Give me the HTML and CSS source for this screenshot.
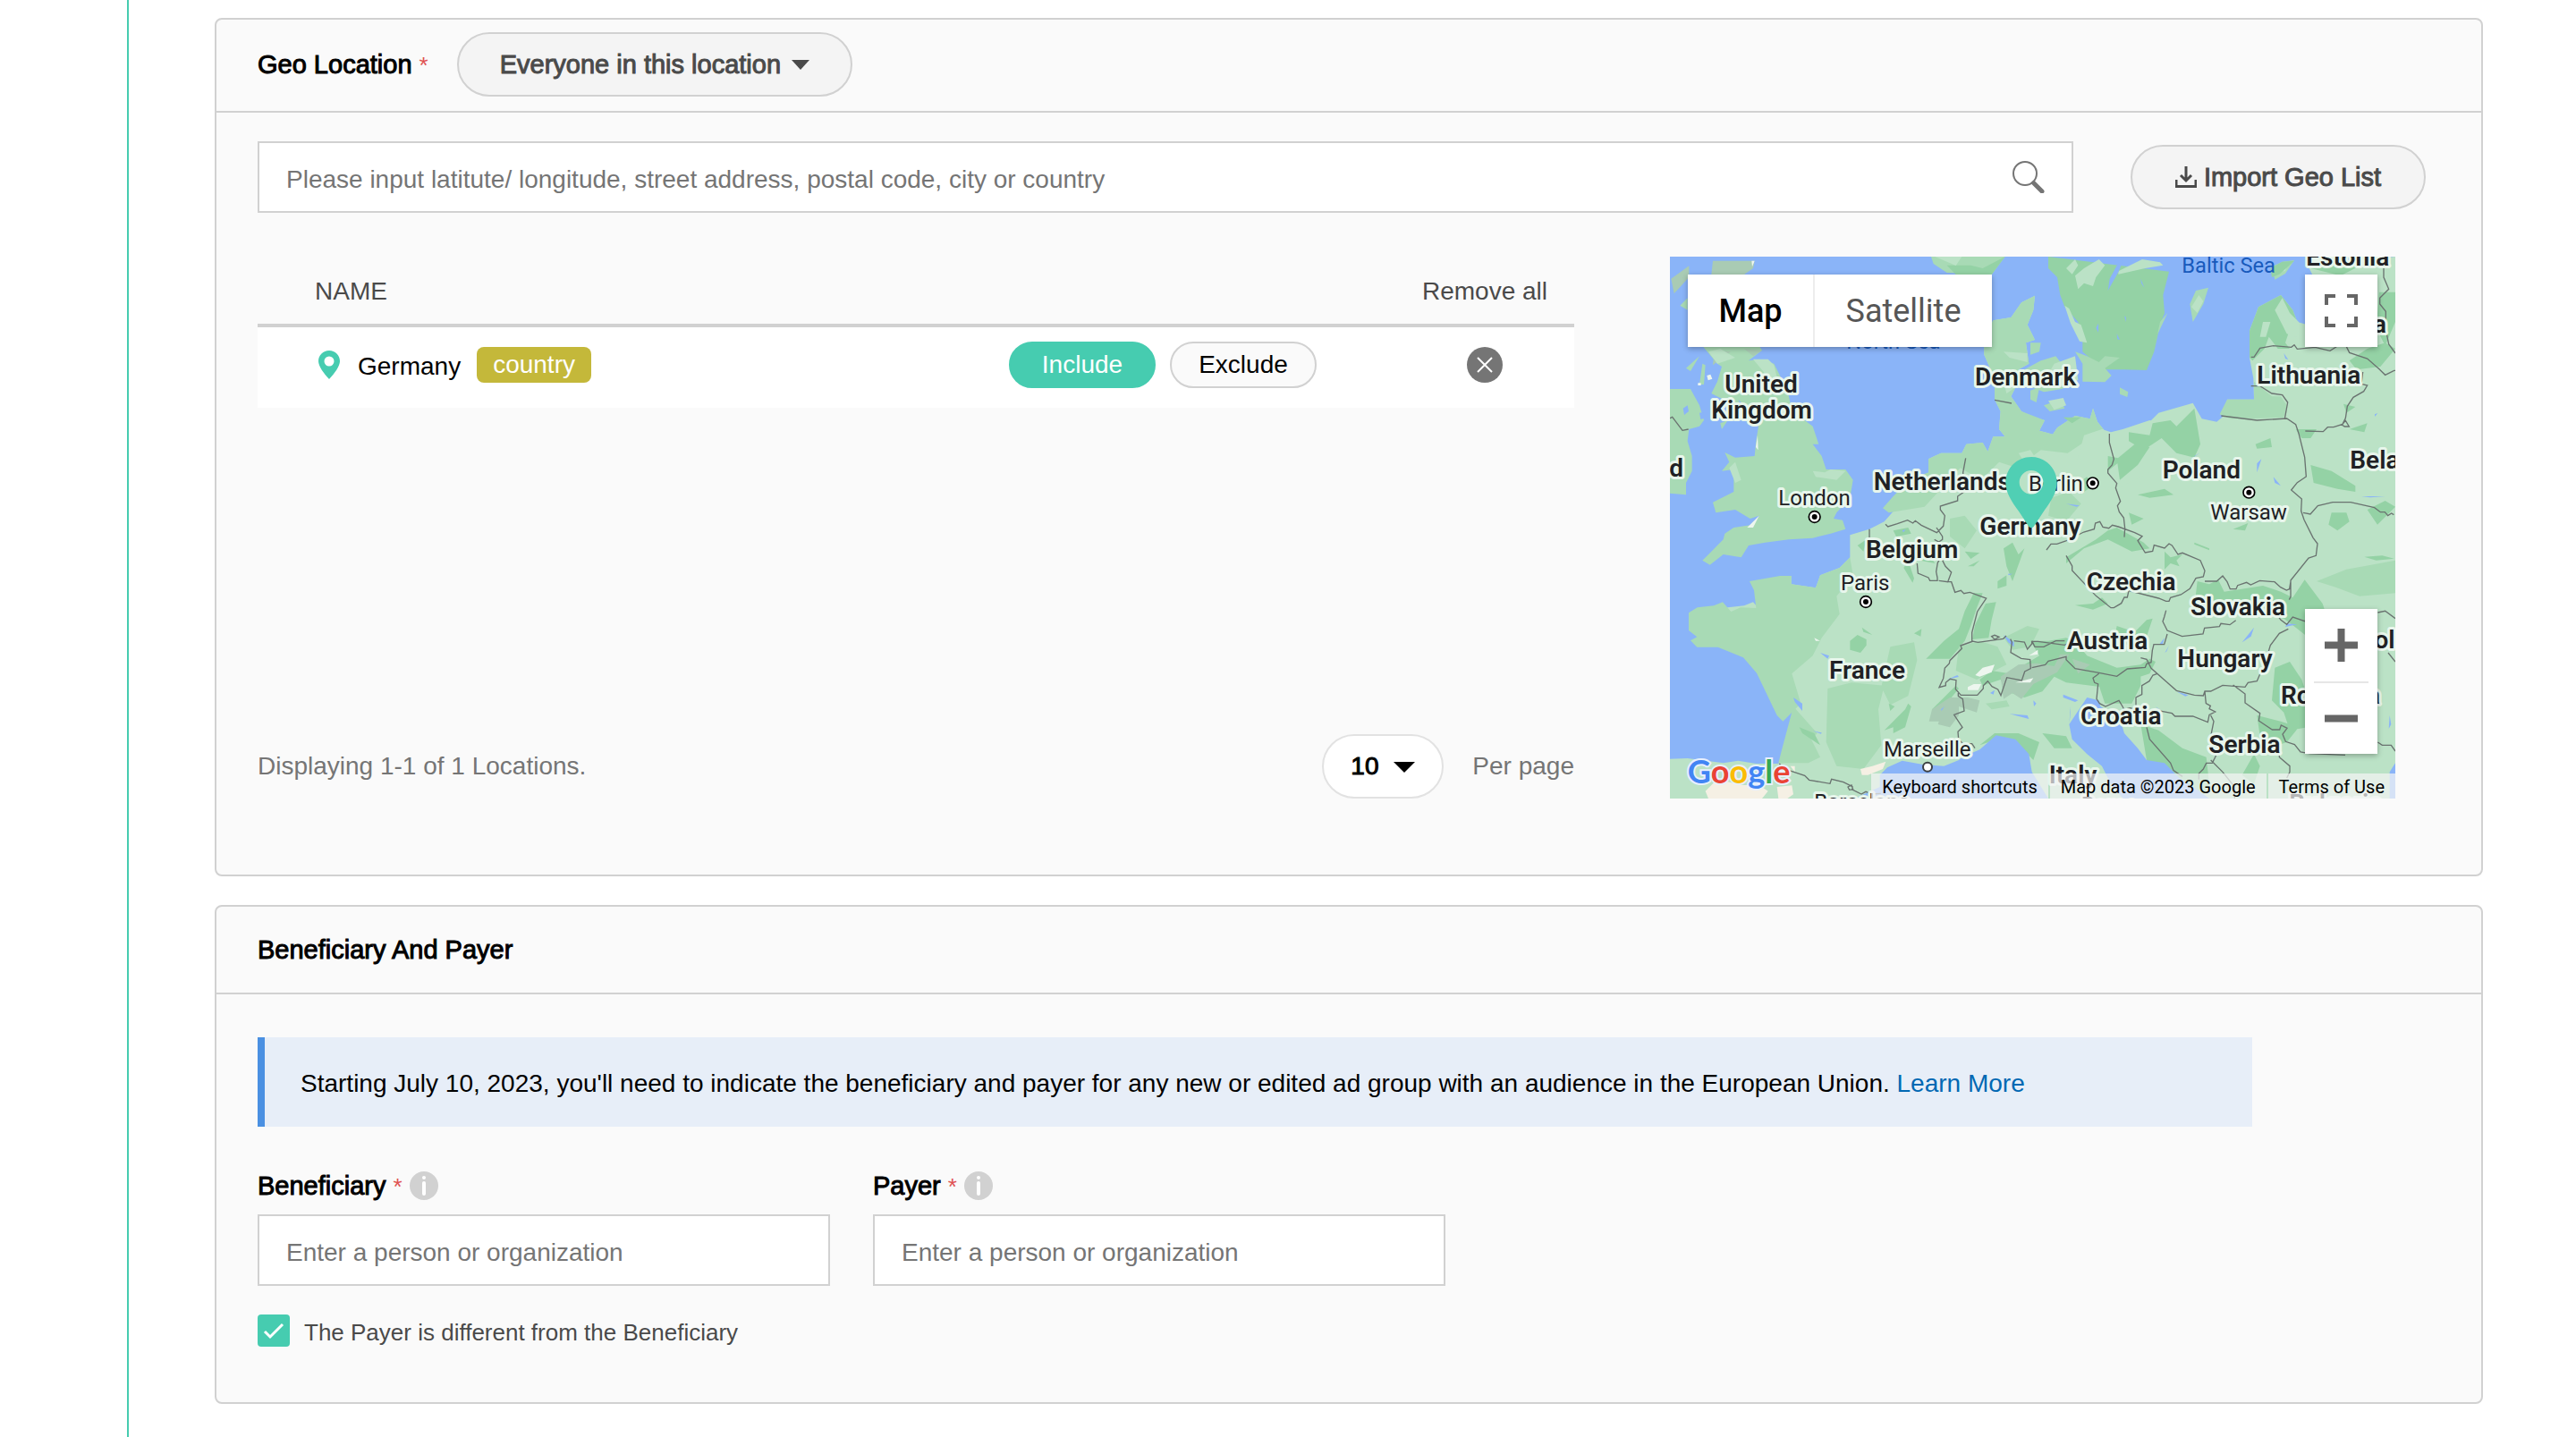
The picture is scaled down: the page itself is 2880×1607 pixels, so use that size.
FILE: index.html
```html
<!DOCTYPE html>
<html lang="en">
<head>
<meta charset="utf-8">
<title>Ad group targeting</title>
<link rel="stylesheet" href="styles.css">
</head>
<body>
<main class="page">
  <section class="card">
    <header class="card-header">
      <h2 class="title"><label for="scope">Geo Location</label> <span class="required">*</span></h2>
      <div class="select-wrap">
        <select class="pill scope" id="scope"><option>Everyone in this location</option></select>
        <svg class="caret caret-scope" viewBox="0 0 20 11" aria-hidden="true"><path d="M0 0h20L10 11z"/></svg>
      </div>
    </header>
    <div class="card-body geo-body">
      <div class="search-row">
        <div class="search">
          <input class="field" type="text" aria-label="Search locations" placeholder="Please input latitute/ longitude, street address, postal code, city or country">
          <svg class="search-icon" viewBox="0 0 36 36" aria-hidden="true"><circle cx="14" cy="14" r="13" fill="none" stroke="#757575" stroke-width="2"/><path d="M24 25l9 9" stroke="#757575" stroke-width="5" stroke-linecap="round"/><path d="M22 23l3 3" stroke="#757575" stroke-width="3"/></svg>
        </div>
        <button class="pill import" type="button"><svg class="import-icon" viewBox="0 0 24 24" aria-hidden="true"><path d="M12 0v15M6 10l6 6 6-6M1 15v7.500h22V15" fill="none" stroke="currentColor" stroke-width="3"/></svg>Import Geo List</button>
      </div>
      <div class="geo-columns">
        <div class="locations">
          <table class="table">
            <colgroup><col><col class="col-mode"><col class="col-remove"></colgroup>
            <thead><tr><th class="name-cell" scope="col">NAME</th><th></th><th class="remove-cell" scope="col"><button class="plain" type="button">Remove all</button></th></tr></thead>
            <tbody><tr>
              <td class="name-cell"><div class="place">
                <svg class="pin" viewBox="0 0 24 32" aria-hidden="true"><path fill-rule="evenodd" d="M12 0C5.300 0 0 5.200 0 12c0 5 6 14 12 20 6-6 12-15 12-20C24 5.200 18.700 0 12 0zM12 6.500a5.500 5.500 0 1 1 0 11 5.500 5.500 0 0 1 0-11z"/></svg>
                <span class="place-name">Germany</span><span class="badge">country</span></div></td>
              <td><div class="modes"><button class="mode mode-on" type="button">Include</button><button class="mode" type="button">Exclude</button></div></td>
              <td class="remove-cell"><button class="remove" type="button" aria-label="Remove Germany"><svg viewBox="0 0 40 40" aria-hidden="true"><circle cx="20" cy="20" r="20" fill="#757575"/><path d="M12 12l16 16M28 12L12 28" stroke="#fff" stroke-width="2"/></svg></button></td>
            </tr></tbody>
          </table>
          <div class="pager">
            <span>Displaying 1-1 of 1 Locations.</span>
            <div class="per-page">
              <div class="select-wrap">
                <select class="pill size" id="size"><option>10</option></select>
                <svg class="caret caret-size" viewBox="0 0 24 12" aria-hidden="true"><path d="M0 0h24L12 12z"/></svg>
              </div>
              <label for="size">Per page</label>
            </div>
          </div>
        </div>
        <div class="map">
          <svg class="map-art" viewBox="21 21 2433 1818" role="img" aria-label="Map of central Europe">
            <rect class="sea" x="21" y="21" width="2433" height="1818"/>
            <path class="land" d="M21 1706L80 1704 200 1720 250 1712 310 1722 385 1722 400 1700 415 1680 425 1610 433 1520 438 1480 422 1440 388 1420 370 1370 345 1318 300 1300 260 1283 215 1287 192 1262 214 1250 186 1228 186 1216 215 1198 270 1192 300 1180 328 1212 360 1198 412 1200 405 1140 390 1110 390 1092 428 1092 428 1120 510 1132 525 1090 590 1065 625 1030 625 955 690 935 740 910 775 870 830 815 890 745 888 700 930 680 1000 680 1015 650 1070 645 1087 675 1105 625 1145 625 1125 600 1130 540 1110 500 1110 430 1075 350 1075 300 1105 235 1165 225 1200 175 1245 152 1240 200 1220 250 1245 300 1215 310 1225 380 1190 400 1190 440 1165 490 1200 540 1240 560 1278 570 1260 605 1305 617 1320 595 1380 555 1430 565 1440 530 1455 575 1475 600 1490 620 1530 605 1630 575 1660 545 1775 512 1805 565 1855 575 1885 550 1890 500 1980 500 1978 430 1965 360 1965 270 1995 190 2070 150 2110 200 2125 240 2160 250 2190 110 2165 60 2210 45 2454 21V1839H21z"/>
            <path class="mid" d="M390 1092h38v28l82 12 15-42 65-25 35-35 10 60-55 70 10 60-60 80-30 60-70 60 30 100-60 60-20-20-68-142-45-52-85-35-70 0-22-22 22-12-28-22V1216l29-18 55-6 30-12 28 32 32-14 52 2-7-60-15-30zM550 1470l80-20 110 10-20 80 10 120-60 80-90-10-35-80zM760 1330l80-15 10 60-30 120-60 30-30-60zM435 1530l80 90-20 20 30 60-40 20-100 0 10-40zM888 745v-45l42-20h70l15-30 55-5 17 30 18-50h40l-20-25 5-60-20-40v-70l-35-80v-50l30-65 60-10 35-50 45-23-5 48-20 50 25 50-30 10 10 70-35 20v40l-25 50 35 50 78 30-18 35 45 12 15-22 60-40 50 10 10-35 15 45 20 25-120 80-90-10-80 60-60-20-60 60-70-40-120 130-120 20-20-15 35-40 55-55z"/>
            <path class="land" d="M1140 340l80 5v30l-60-15zM1140 440l30-20 10 40-30 20zM1190 680l40-10 20 30-40 10z"/>
            <path class="mid" d="M130 320h190l10 15-45 35 35-5 50 15 20 40 30 70 10 50 30 20 40 30 20 60-20 0 30 40 15 45h65l25 35-10 60-45 50-10 20 30 5 10 30-50 15-60 15-80 5-80 10-55 10-25 40-60-10-45 35-25-15 30-30 40-40 5-20 30-20 65-10 20-30-30 10-50-30-65 10-10-35 70-35v-75l-40 5 25-30-15-32 35 17 65-5 5-50 8-50-28-50-40-20-50-20-40-20 20-40 15-50-15-10zM21 465h69l30 55 15 50-15 20-35 10-5 40 15 50v50l-20 40v40l-54-5zM190 580l25-10-20 30zM897 21l8 24 45 30 150 6 45-60zM75 395l45-40-30 50zM120 450l10-70 10 5-5 65zM55 185l25-25v40z"/>
            <path class="muted" d="M25 95l60-43v38l-50 55zM165 35h140l-5 25-30 21H160zM270 330l60 5-30 20zM225 340l-60 45 5-50z"/>
            <path class="lake" d="M65 530l15-10 4 20-15 12zM120 545l12-2 4 20-12 4zM250 500l40 40-20 5z"/>
            <path class="land" d="M150 340l40-10 50 30-60 20zM300 365h50l20 20 10 40-30 0zM500 740l40 5 20-10 50 5-30 30-70-10zM220 730l20-20 20 60-20 10z"/>
            <path class="dark" d="M950 50l80 0 40 10 75-39-45 60H980zM1290 21v39l30 30 10 60 15 40 45 50 15 60 0 20 0 20 70 60 70 0 75 2 25-62 20-90 15-40-5-60 20-79z"/>
            <path class="land" d="M910 21h90l-20 30zM1345 185l15 10 20 45 20 10 20 60-25-5-30-60zM1350 60l30-30 10 20-20 30zM1380 85l30-25 50-30 20 20-30 40-10 30-30-10-20 20zM1525 70l80-40 60 10 10 10-60 10-90 20z"/>
            <path class="lake" d="M1490 135l6-40 40-74 10 0-20 50zM1450 260l8-15v30zM1545 220l6 5v15zM1520 280l10 20-8-2zM1600 95l12 30-10-15z"/>
            <path class="mid" d="M1380 340l40 15 40 20 20-20 50 5-50 35 22 25-22 22-75-2 0-60zM1765 180l20-45 42-10-17 55-35 60zM1230 310l35 0-5 30-30 10zM1690 210l-25 30-20 95 10-50zM1530 460l28 15-3 17-25-10zM2040 55l35-17 40-5-30 45-35 20zM1210 400l55-30 50-15 70 90-50 20-60 10-50-20zM1275 520l55-20 15 30-50 10zM1230 470l30-10-10 50-20-10z"/>
            <path class="land" d="M1310 380l70-25 10 80-60 20-40-40zM1290 505l50-10 10 25-40 15zM1770 190l25-40 15 20-20 40zM2060 70l30-25-5 25z"/>
            <path class="dark" d="M2035 60l40-22 40-3-50 45-25 10zM1965 360v-90l30-80 75-40 40 50 15 40-20 10-20 60 15 20-40 0-30-40-15 40-40 40zM2400 140l54 0 0 100-34 80-30-60zM2300 370l60-40 60-20 34 20-50 60-80 10zM2170 60l40-15 120 10-60 30z"/>
            <path class="land" d="M2050 200l25-40 25 50 30 30 20 60-60-20zM2010 240l25 0-15 50-20 0z"/>
            <path class="mid" d="M1890 500h90l0-60 60 50 30 0 20 30-10 40-120 5-60 0-35-15zM2190 1110l100-40 164-30v110l-120 10-80-30z"/>
            <path class="land" d="M1410 620l60-20 30 10 40-10 90-30 60 10 30 120-200 100-80-10-60-60z"/>
            <path class="dark" d="M1640 580l60-10 20 20 60-60 10 60 10 60-20 45-60-15-50-50-60 40-50-30 0-30 70 10zM1985 650l50-20 5 30-50 5zM2120 600l70 0-20 30-30 0zM2170 720l70 20 80 50 0 20-60-10-80-20zM2240 880l50 0 10 30-40 30-30-20zM2300 600l60-20-10 30zM1520 700l60-50 50 10-40 60-60 50zM1560 880l50 20-40 20zM1590 820l90-20 30 20-80 10zM1910 935l50-20-10 25zM2360 870l60-30 34 20-60 60zM1780 980l50 20 0 6-50-20zM2350 1028l60-4 40 10-60 6zM1390 780l30-20 20 30-30 20zM1490 690l50 10-50 40zM1340 560l60 0-30 20zM2280 515l40 10-30 20z"/>
            <path class="dark" d="M1040 1150l30 0-20 50-20 60-20 50-50 60-80 0 60-60 50-40 20-60zM1080 1185l35-5-15 60-10 60-55 5 10-50zM625 1310l25-20 30 15 0 20-20 25-35-10zM665 1265l35 25-30-10zM840 1285l25-15-3 25zM1140 1000l30-20 20 40 20-20-40 110-20-50zM1120 1110l30-20 0 35-30 10zM780 1570l30-30 10-20 10 10-20 70-40 20 0-20-30 10zM755 1520l20 10-15 15zM900 1540l40-40 40-40 10 10-50 60-20 30-20-10zM455 1600l50 20 20 40-60-40zM1020 1060l40-20-20 20zM1010 1010l50 5-30 20zM830 990l40 0 40 60-50-10zM770 940l50-10 10 20-50 10zM820 1040l20 60-5 15-30-50zM650 990l30-20-10 40z"/>
            <path class="mid" d="M1140 1300l80-40 40 10-30 60-60 10zM990 1330l70-20 60 20 30 60-100 50-70-30zM1080 1520l70-10 10 20-60 10zM1300 830l60-20 40 40-50 60-60-20zM960 900l50-10 40 50-40 60-50-40z"/>
            <path class="dark" d="M1230 1310l60 0 60-10 30 10 40 50 100 40 80-10 30-20 20 10-20 40-90 30-30 20-160-20-40-20-40 50-60 20-60-20-20-40-60 20-10-20 40-30 60 10 50-30 50-30zM1350 1030l100-60 40-30 30-10 90 50 20 20-60 10-80-40-80 30-60 50zM1380 1190l60-5 30-20 20 20-50 20zM1680 1010l20 20 40-10-20 20 10 20-30-10-20 20zM1790 1110l40 10 30-15 20 40 130-20 60 20 40 20 40-60 60 80 20 60-60 60-50-40-40-30-80-20-160 0-60-20zM1520 1260l60 20 40-40 20-5-20 60-60 30-50-20zM1450 1420l90-20 60 20 0 40-30 60-90 0-20-60zM1600 1590l60 20 80 60 80 30 10 90-20 40-30-20-80-40-80-60zM2050 1400l50-20 40 60 20 60 0 100-60 10-20-60-40-40zM1990 1560l80 20 60 20-40 50-60 20-30-40zM1270 1620l80 10 20 40-60 0zM1980 1690l20 40-20 60-40-30zM1060 1660l50-40 80 0 70 30-20 60-60-60-60-10z"/>
            <path class="muted" d="M900 1540l60-40 60 0 40 10-10 40-60-20-50 50-50 0zM1130 1430l60-40 60-5 60 10 20-40 30 0-40 60-80 40-40 50-30-20-30 20zM930 1560l60-30 0 30-30 40-40-10zM1370 1370l60 20-40 30z"/>
            <path class="snow" d="M1045 1425l25-25 40-10-10 25-40 15zM1020 1465l20-10 25 0-10 20-35 0zM1180 1450l60-15-10 15zM505 1300l20 10-15 0zM315 620l2 50-8-10zM320 890l-20 40-20 0zM295 35l10 0-8 20zM145 420l12-4 6 15-14 5zM115 445h10v8h-10zM1225 1360l30-20 0 15z"/>
            <path class="sand" d="M150 1839l-10-25 40-40 80 20 60 0 30 20-20 25zM660 1740l40-10 45-15-10 25-50 20-20 0zM380 1800l50-5 5 30-20 14h-30zM425 1730l15 0 0 20z"/>
            <path class="sea" d="M725 1790V1760L750 1735 800 1712 870 1725 940 1730 990 1710 1000 1700 1060 1675 1115 1627 1180 1640 1225 1690 1235 1750 1290 1839H640L725 1800zM1360 1590l60-90 0 0-55 30 0 20zM1365 1530L1420 1500 1460 1510 1465 1530 1530 1570 1545 1620 1590 1670 1620 1710 1680 1720 1730 1770 1790 1810 1830 1839H1540L1500 1790 1470 1730 1420 1690 1370 1640 1360 1590zM2454 1720V1839H2435V1750z"/>
            <path class="lake" d="M525 1350l30 10-5 10zM435 1500l30 20 0 25-25-30zM500 1612l30 6-2 4zM950 1440l35-15 5 6-30 6zM1140 1290l35 25 0 15-20-15zM1160 1555l60 5 5 12zM1095 1485l15-10-4 15zM930 1540l12-10-10 15zM1240 1510l10 10-8 10zM1340 1490l50 20-10 5-40-15zM1680 1300l-6 20-10 0zM1695 1325l-8 20-6 5zM1980 1265l-40 50 30-20zM2090 1252l35 3-40 8zM1720 1480l40 12-10 4zM1650 1530l20 15-6 0zM2005 700l-15 45 0-30zM2045 760l25 30-20-10zM2385 550l10-4-10 12zM1780 690l20-12-20 14zM1350 850l45 6-10 4zM2340 825l80 0-50 4zM2080 345l15 22-10-4zM1155 1085h16l-14 5zM625 1540l15 0zM1415 1505l20 15-15-2zM800 940l12-4-8 10zM2435 1560l5 30-8 15z"/>
            <path class="border" d="M21 563l8-4 34 45 20-4M1110 502l57 11M1013 697l-9 48 4 65-22 15 0 15-58 18 0 12 15 20-5 35-22 22-52-25-20-15-8 8-18-10-34 12-32 10-8-8M690 935v60l2 12M915 930l20 30 0 10-12 8-15-8M850 1050l3 33 35 15 5 10 25 0 0-10-4-20 5-30 12-20M935 1040l10 20 20 20-12 32-30-4M955 1112l10 0 12 35 20-6 10 10 20-4 55 20-30 45-18 70v29l20 4 85-12 10-10M1038 1311l-42 15 4 10-40 40-2 10-15 15-5 35-14 30 22-6 0-10 15-12 20 4-2 30 18 20 55 0 20-22 0-10 15-15 14 18 20 10 10 20 20-60 50 10 10-30 20-10-2-30-30-4-35-20 4-35-5-10M1175 1310l35 4 10 24 15-18 0-8 20 0 90 12 20-10 14-20M988 1480l0 15 15 10 5 40-34 13 28 42-15 15 2 25 15 15 30 0 10 15M1235 1310l10 20 30 0 40-20 30 0M1235 1400l45-10 10-12 60-15 0 10 30 30 80 14 60 12 35-25 60-5 5-12 15-5 4-40 5-20 35 0 10-35M1350 1024l20 35 0 15 80 85 50 40 10 0 25-15 10-20 10 0 5-22 100 25 25 10 10 0 5-12 35-10 30-20 20-35 25-5 5-20-15-35-60-25-15 5-20-30-10-6-15 15-35-10-5 20-25 5-25-40 15-15-25-12-55-20-20-5-12 10-20-4-10-18-15 5-4 20-35 10-60 30-30 10-20 0-15 20M1495 615v30l15 55-6 20-14 15 0 12 30 35-4 15 16 45-10 15 6 20 15 20 4 35-2 30M1870 555l120 15 100-6 30 20 10 30 20 80 5 65-30 20-20 25 35 30-2 40 10 30 30 60 15 20-5 40-25 8-60 75 0 55-5 10M1970 455l30 0 40 25 35 5 18 25-10 55M1970 358h10l20-30 45-8 60 5 10-8 10 14 60-6 50 12 25-16 20-8 10 10 10 20 60 20 40 35 20 20 30-15 40 0 34-45M2345 408l-5 40 20 5-12 20-35 20-20 30-6 40-10 20-30 10-20 0-15 15-60-2M2415 60v30l17 40-30 30 0 20 20 25 0 40 0 20 10 50 22 30M2145 880l24 5 25-28 50-12 60 0 80 18 20 15 15 0 10 12 12-8 8 5M2275 585l12-14 12 20-15 0zM1815 1110l40 0 20-18 15 20 10 24 20 0 5-12 30-10 14 8 30-14 50 4 20 18 20 10 10-4 4-25M1685 1208l-6 22-5 15 15 30 50 20 70-8 5-20 50-5 5-10 30 4 20-15M2010 1190l45 30 15 20 20 15 20-25 40 14 15-18 90 0 50-10 34 20M2095 1270l-30 15-30 40-15 50-30 70-30 5-10 15-75-6-40 20-20 0-5 15-30-2-60-15-85-75-15-30-20-5M1440 1435l20-15M1460 1420l-20 15 5 15 12 5-5 50 10 15 20 10 45-20 12 20 5 10 20-5 20 5 0-40 20-10 0-30 25-15 12-20 15-5M1815 1480l4 40 15 8-4 10 20 10-20 10-5 25-50-20-60 0-10-10-50-10M1910 1458l40 30 0 30 50 35-4 25 45 30 25 0 5-15 20 10-15 20 10 25 30 10 20 25 30 5 120 5M1835 1560l10 20-10 50 25 50-20 40-20 0-10 20-15 15 0 20M1620 1600l10 40 70 80 10 25 30 20M1835 1710l40 40 40 50 0 39M2065 1680l0 20 35 30 0 20-10 20M2395 1215l25-5 34 25M2430 1350l24 30M2395 1650l15 10 30 0 14 20M388 1722l10 10 30 15 45 15 15 15 70 12 5-15 40 10 30 15 0 10 30 15 15-8 20 8 30-2M618 1800l12-6 5 14-12 2zM1100 1295l10-4 15 6-15 8z"/>
            <g class="label country">
              <text x="205" y="477">United</text><text x="160" y="564">Kingdom</text><text x="1044" y="453">Denmark</text><text x="704" y="803">Netherlands</text><text x="1060" y="955">Germany</text><text x="678" y="1031">Belgium</text><text x="555" y="1438">France</text><text x="1673" y="765">Poland</text><text x="1990" y="447">Lithuania</text><text x="2155" y="51">Estonia</text><text x="2302" y="733">Belarus</text><text class="end" x="2424" y="275">Latvia</text><text x="1418" y="1141">Czechia</text><text x="1767" y="1223">Slovakia</text><text x="1353" y="1338">Austria</text><text x="1723" y="1397">Hungary</text><text x="1398" y="1589">Croatia</text><text x="1828" y="1685">Serbia</text><text x="2070" y="1521">Romania</text><text x="1292" y="1787">Italy</text><text x="2310" y="1334">Moldova</text><text class="end" x="66" y="758">Ireland</text>
            </g>
            <g class="label city">
              <text x="385" y="856">London</text><text x="594" y="1141">Paris</text><text x="1224" y="808">Berlin</text><text x="1834" y="902">Warsaw</text><text x="738" y="1699">Marseille</text><text x="505" y="1875">Barcelona</text><text x="1400" y="1885">Rome</text>
            </g>
            <text class="label country" x="2098" y="1885">Bulgaria</text>
            <text class="water" x="1738" y="75">Baltic Sea</text><text class="water" x="613" y="330">North Sea</text>
            <g class="capital"><circle cx="506" cy="894" r="19"/><circle cx="678" cy="1179" r="19"/><circle cx="1439" cy="781" r="19"/><circle cx="1963" cy="812" r="19"/></g>
            <g><circle cx="506" cy="894" r="9"/><circle cx="678" cy="1179" r="9"/><circle cx="1439" cy="781" r="9"/><circle cx="1963" cy="812" r="9"/></g>
            <circle class="town" cx="885" cy="1733" r="15"/>
            <path class="marker" fill-rule="evenodd" d="M1233 693c-48 0-86 38-86 86 0 34 22 66 44 96l34 52q8 8 16 0l34-52c22-30 44-62 44-96 0-48-38-86-86-86zM1233 738a40 40 0 1 1 0 80 40 40 0 0 1 0-80z"/>
            <text class="logo" x="80" y="1788"><tspan fill="#4285f4">G</tspan><tspan fill="#ea4335">o</tspan><tspan fill="#fbbc04">o</tspan><tspan fill="#4285f4">g</tspan><tspan fill="#34a853">l</tspan><tspan fill="#ea4335">e</tspan></text>
          </svg>
          <div class="map-types"><button class="map-type map-type-on" type="button">Map</button><button class="map-type" type="button">Satellite</button></div>
          <button class="map-full" type="button" aria-label="Toggle fullscreen"><svg viewBox="0 0 37 37" aria-hidden="true"><path d="M2 12V2h10M25 2h10v10M35 25v10H25M12 35H2V25" fill="none" stroke="#666" stroke-width="4"/></svg></button>
          <div class="map-zoom">
            <button type="button" aria-label="Zoom in"><svg viewBox="0 0 37 37" aria-hidden="true"><path d="M0 18.500h37M18.500 0v37" stroke="#666" stroke-width="8"/></svg></button>
            <button type="button" aria-label="Zoom out"><svg viewBox="0 0 37 37" aria-hidden="true"><path d="M0 18.500h37" stroke="#666" stroke-width="8"/></svg></button>
          </div>
          <div class="map-legal"><button type="button">Keyboard shortcuts</button><span>Map data ©2023 Google</span><a href="#terms">Terms of Use</a></div>
        </div>
      </div>
    </div>
  </section>

  <section class="card">
    <header class="card-header card-header-short"><h2 class="title">Beneficiary And Payer</h2></header>
    <div class="card-body payer-body">
      <p class="notice">Starting July 10, 2023, you'll need to indicate the beneficiary and payer for any new or edited ad group with an audience in the European Union. <a href="#learn">Learn More</a></p>
      <div class="fields">
        <div class="form-field">
          <div class="field-label"><label class="title" for="beneficiary">Beneficiary <span class="required">*</span></label><svg class="info" viewBox="0 0 32 32" aria-hidden="true"><circle cx="16" cy="16" r="16" fill="#d1d1d1"/><circle cx="16" cy="7" r="2" fill="#fff"/><path d="M16 13v12" stroke="#fff" stroke-width="4" stroke-linecap="round"/></svg></div>
          <input class="field" id="beneficiary" type="text" placeholder="Enter a person or organization">
        </div>
        <div class="form-field">
          <div class="field-label"><label class="title" for="payer">Payer <span class="required">*</span></label><svg class="info" viewBox="0 0 32 32" aria-hidden="true"><circle cx="16" cy="16" r="16" fill="#d1d1d1"/><circle cx="16" cy="7" r="2" fill="#fff"/><path d="M16 13v12" stroke="#fff" stroke-width="4" stroke-linecap="round"/></svg></div>
          <input class="field" id="payer" type="text" placeholder="Enter a person or organization">
        </div>
      </div>
      <div class="check"><span class="check-box"><input type="checkbox" id="different" checked><svg viewBox="0 0 36 36" aria-hidden="true"><path d="M8 19l6 6 14-14" fill="none" stroke="#fff" stroke-width="3"/></svg></span><label for="different">The Payer is different from the Beneficiary</label></div>
    </div>
  </section>
</main>
</body>
</html>
```
FILE: styles.css
```css
* { box-sizing: border-box; }

body {
  margin: 0;
  background: #fff;
  color: #000;
  font: 28px/36px "Liberation Sans", Arial, sans-serif;
}

button, input, select { font: inherit; color: inherit; margin: 0; }
button { cursor: pointer; }
svg { display: block; }

.page {
  min-height: 100vh;
  margin-left: 142px;
  padding: 20px 104px 36px 96px;
  border-left: 2px solid #46ccb0;
  display: flex;
  flex-direction: column;
  gap: 32px;
}

.card { border: 2px solid #d1d1d1; border-radius: 8px; background: #fafafa; }
.card-header {
  display: flex;
  align-items: center;
  gap: 32px;
  padding: 14px 46px 16px;
  border-bottom: 2px solid #d1d1d1;
}
.card-header-short { padding: 30px 46px; }
.title { margin: 0; font-size: 29px; font-weight: 400; -webkit-text-stroke: 1px currentColor; }
.required { color: #e05252; font-size: 26px; -webkit-text-stroke: 0; }

.pill {
  height: 72px;
  border: 2px solid #d1d1d1;
  border-radius: 36px;
  background: #f4f4f4;
  color: #4a4a4a;
  font-size: 29px;
  -webkit-text-stroke: 1px currentColor;
}
.select-wrap { position: relative; }
select { appearance: none; }
.scope { width: 442px; padding: 0 46px; }
.caret { position: absolute; top: 31px; pointer-events: none; }
.caret-scope { right: 48px; width: 20px; fill: #4a4a4a; }
.caret-size { right: 32px; width: 24px; }

.geo-body { padding: 32px 62px 85px 46px; }
.search-row { display: flex; align-items: center; gap: 64px; }
.search { position: relative; flex: 1; }
.field {
  display: block;
  width: 100%;
  height: 80px;
  padding: 6px 30px 0;
  border: 2px solid #d1d1d1;
  border-radius: 0;
  background: #fff;
}
.field::placeholder { color: #757575; opacity: 1; }
.search-icon { position: absolute; right: 32px; top: 22px; width: 36px; }
.import { display: flex; align-items: center; justify-content: center; gap: 8px; width: 330px; padding: 0; }
.import-icon { width: 24px; }

.geo-columns { display: flex; gap: 107px; margin: 49px 34px 0 0; }
.locations { flex: 1; display: flex; flex-direction: column; justify-content: space-between; }

.table { width: 100%; table-layout: fixed; border-collapse: collapse; }
.col-mode { width: 432px; }
.col-remove { width: 200px; }
.table th { height: 77px; padding: 2px 0 0; border-bottom: 4px solid #d1d1d1; color: #4a4a4a; font-weight: 400; text-align: left; }
.table td { padding: 16px 0 22px; background: #fff; }
.table .name-cell { padding-left: 64px; }
.table .remove-cell { text-align: center; }
.plain { padding: 0; border: 0; background: none; }
.place { display: flex; align-items: center; padding-left: 4px; }
.pin { width: 24px; fill: #46ccb0; }
.place-name { padding: 4px 18px 0 20px; }
.badge { height: 40px; padding: 2px 18px 0; border-radius: 8px; background: #c4b83a; color: #fff; }
.modes { display: flex; gap: 16px; }
.mode { width: 164px; height: 52px; padding: 0; border: 2px solid #d1d1d1; border-radius: 26px; background: #fafafa; }
.mode-on { border-color: #46ccb0; background: #46ccb0; color: #fff; }
.remove { width: 40px; padding: 0; border: 0; background: none; display: inline-block; vertical-align: middle; }

.pager { display: flex; align-items: center; justify-content: space-between; color: #757575; }
.per-page { display: flex; align-items: center; gap: 32px; }
.size { width: 136px; padding: 0 30px; border-color: #e2e2e2; background: #fff; color: #000; font-size: 28px; }

.map { position: relative; width: 811px; overflow: hidden; font-family: Roboto, sans-serif; }
.map-art { width: 100%; }
.sea, .lake { fill: #8ab4f8; }
.land { fill: #bbe2c6; }
.mid { fill: #a8dab5; }
.dark { fill: #94d2a5; }
.muted { fill: #a9cbb4; }
.sand { fill: #f5f0e4; }
.snow { fill: #edf6ef; }
.border { fill: none; stroke: #6a7370; stroke-width: 4; }
.label { fill: #202124; stroke: #e8f6ec; stroke-width: 18; stroke-linejoin: round; paint-order: stroke; }
.country { font-size: 84px; font-weight: 600; }
.end { text-anchor: end; }
.city { font-size: 72px; }
.water { font-size: 71px; fill: #185abc; }
.capital circle { fill: #fff; stroke: #000; stroke-width: 5; }
.town { fill: #fff; stroke: #3c4043; stroke-width: 6; }
.marker { fill: #50cfb4; }
.logo { font: 700 108px Lato, sans-serif; stroke: #e8f0fe; stroke-width: 12; paint-order: stroke; }

.map button { padding: 0; border: 0; background: #fff; }
.map-types { position: absolute; left: 20px; top: 20px; display: flex; box-shadow: 0 2px 6px rgba(0, 0, 0, .3); }
.map .map-type { width: 200px; height: 81px; border-left: 2px solid #ededed; color: #565656; font-size: 36px; }
.map .map-type-on { width: 140px; border: 0; color: #000; font-weight: 500; }
.map-full, .map-zoom { position: absolute; right: 20px; width: 81px; box-shadow: 0 2px 6px rgba(0, 0, 0, .3); }
.map-full { top: 20px; height: 81px; }
.map-full svg, .map-zoom svg { width: 37px; margin: auto; }
.map-zoom { bottom: 50px; padding: 0 10px; background: #fff; }
.map-zoom button { display: block; width: 100%; height: 81px; }
.map-zoom button + button { border-top: 2px solid #e6e6e6; }
.map-legal { position: absolute; right: 0; bottom: 0; display: flex; height: 28px; gap: 2px; font-size: 20px; line-height: 30px; white-space: nowrap; }
.map-legal > * { padding: 0 12px; background: rgba(245, 245, 245, .7); color: #000; text-decoration: none; }
.map .map-legal button { padding: 0 12px; background: rgba(245, 245, 245, .7); }

.payer-body { padding: 48px 62px 62px 46px; }
.notice { margin: 0 194px 0 0; padding: 34px 40px 30px; border-left: 8px solid #4a90e2; background: #e7eef8; }
.notice a { color: #0068b3; text-decoration: none; }
.fields { display: flex; gap: 48px; margin-top: 50px; }
.form-field { width: 640px; }
.field-label { display: flex; align-items: center; gap: 8px; height: 32px; margin-bottom: 16px; }
.info { width: 32px; }
.check { display: flex; align-items: center; gap: 16px; margin-top: 32px; color: #4a4a4a; font-size: 26px; }
.check label { padding-top: 4px; line-height: 32px; }
.check-box { position: relative; width: 36px; height: 36px; }
.check-box input { appearance: none; display: block; width: 36px; height: 36px; border-radius: 4px; background: #46ccb0; }
.check-box svg { position: absolute; inset: 0; pointer-events: none; }
```
